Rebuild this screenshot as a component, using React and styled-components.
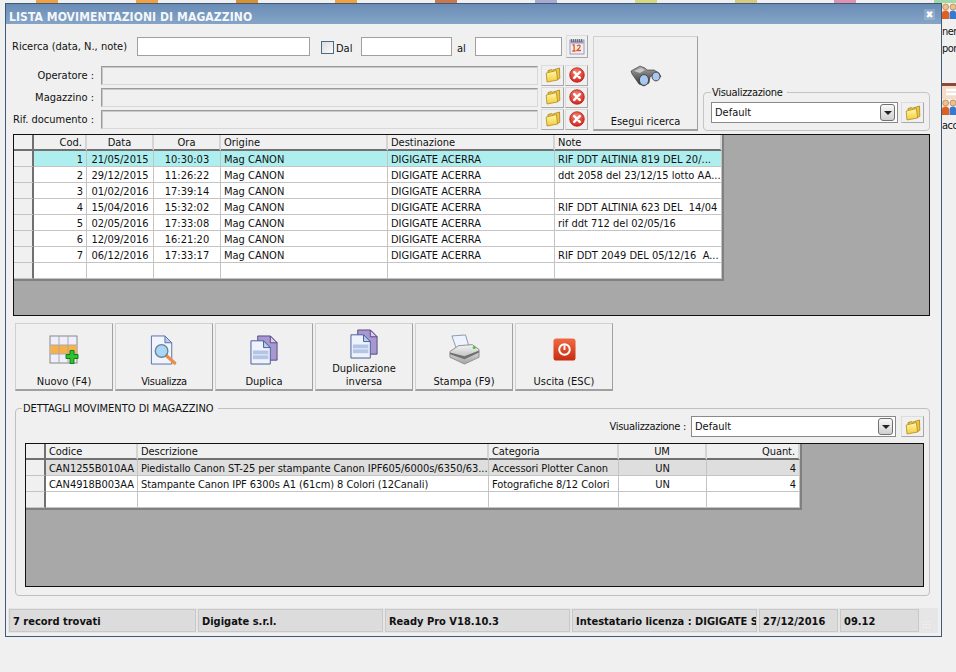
import styled, { createGlobalStyle } from "styled-components";

const GlobalStyle = createGlobalStyle`
  html, body { margin: 0; padding: 0; background: #f0f0f0; }
  body {
    width: 956px;
    height: 672px;
    overflow: hidden;
    position: relative;
    font-family: "DejaVu Sans", "Liberation Sans", sans-serif;
    font-stretch: condensed;
    font-size: 11px;
    color: #111;
  }
  * { box-sizing: border-box; }
`;

const moves = [
  [1, "21/05/2015", "10:30:03", "RIF DDT ALTINIA 819 DEL 20/..."],
  [2, "29/12/2015", "11:26:22", "ddt 2058 del 23/12/15 lotto AA..."],
  [3, "01/02/2016", "17:39:14", ""],
  [4, "15/04/2016", "15:32:02", "RIF DDT ALTINIA 623 DEL  14/04"],
  [5, "02/05/2016", "17:33:08", "rif ddt 712 del 02/05/16"],
  [6, "12/09/2016", "16:21:20", ""],
  [7, "06/12/2016", "17:33:17", "RIF DDT 2049 DEL 05/12/16  A..."],
];

const details = [
  ["CAN1255B010AA", "Piedistallo Canon ST-25 per stampante Canon IPF605/6000s/6350/63...", "Accessori Plotter Canon", "UN", "4"],
  ["CAN4918B003AA", "Stampante Canon IPF 6300s A1 (61cm) 8 Colori (12Canali)", "Fotografiche 8/12 Colori", "UN", "4"],
];

const topColors = ["#f0a040", "#f0a040", "#d89030", "#f0a040", "#c87850", "#a8a8d0", "#d8d880", "#d8c880", "#e090b0", "#a0d8a8"];

function FolderIcon() {
  return (
    <svg width="16" height="16" viewBox="0 0 16 16">
      <defs>
        <linearGradient id="folderFill" x1="0" y1="0" x2="0" y2="1">
          <stop offset="0" stopColor="#fff8b0" />
          <stop offset="1" stopColor="#f4cc38" />
        </linearGradient>
      </defs>
      <path d="M3 5 L3 3.6 L6.2 2.6 L7.4 3.2 L14.5 1 L14.8 11.4 L12.5 12.6 Z" fill="#eec440" stroke="#a88418" strokeWidth="0.8" />
      <path d="M1.2 6 L11.4 3.6 L12.6 13 L2 15 Z" fill="url(#folderFill)" stroke="#b08c20" strokeWidth="0.8" />
    </svg>
  );
}

function DeleteIcon() {
  return (
    <svg width="16" height="16" viewBox="0 0 16 16">
      <defs>
        <radialGradient id="deleteFill" cx="0.45" cy="0.3" r="0.8">
          <stop offset="0" stopColor="#f88070" />
          <stop offset="1" stopColor="#d01810" />
        </radialGradient>
      </defs>
      <circle cx="8" cy="8" r="7.3" fill="url(#deleteFill)" stroke="#a81810" strokeWidth="0.7" />
      <path d="M5.2 5.2 L10.8 10.8 M10.8 5.2 L5.2 10.8" stroke="#fff" strokeWidth="2.6" strokeLinecap="round" />
    </svg>
  );
}

function CalendarIcon() {
  return (
    <svg width="16" height="17" viewBox="0 0 16 17">
      <rect x="1" y="2" width="14" height="14" fill="#eeeef8" stroke="#8888b0" strokeWidth="0.8" />
      <rect x="1.5" y="2.5" width="13" height="3" fill="#9a9ab8" />
      <path d="M2.5 1 v3 M4.5 1 v3 M6.5 1 v3 M8.5 1 v3 M10.5 1 v3 M12.5 1 v3" stroke="#606070" strokeWidth="0.8" />
      <path d="M3.5 7 h1.6 v6 M3.3 13 h3.2 M8 8 q1.5 -1.5 3 -0.5 q1 1 -3 5 h4" fill="none" stroke="#e85810" strokeWidth="1.3" />
    </svg>
  );
}

function BinocularsIcon() {
  return (
    <svg width="32" height="22" viewBox="0 0 32 22">
      <defs>
        <linearGradient id="binoBody" x1="0" y1="0" x2="0" y2="1">
          <stop offset="0" stopColor="#a8a8a8" />
          <stop offset="1" stopColor="#303030" />
        </linearGradient>
      </defs>
      <path d="M1 6 L10 1 L15 3 L17 5 L24 5 L29 8 L31 12 L24 9 L20 12 L19 18 L14 21 L9 19 L2 9 Z" fill="url(#binoBody)" stroke="#303030" strokeWidth="0.6" />
      <path d="M4 6 L11 3 L15 5 L10 8 Z" fill="#c8c8c8" />
      <ellipse cx="14" cy="15" rx="4.6" ry="5.4" fill="#a8c8f0" stroke="#484848" />
      <ellipse cx="26" cy="11.5" rx="4" ry="4.4" fill="#a8c8f0" stroke="#484848" />
    </svg>
  );
}

function NewGridIcon() {
  return (
    <svg width="30" height="30" viewBox="0 0 30 30">
      <rect x="1" y="1" width="27" height="27" fill="#eeeefc" stroke="#888" />
      <rect x="1.5" y="10" width="26" height="9" fill="#f8b048" />
      <path d="M10 1 V28 M19 1 V28 M1 10 H28 M1 19 H28" stroke="#aaa" />
      <path d="M17 19.5 h4 v-4 h4 v4 h4 v4 h-4 v5 h-4 v-5 h-4 Z" fill="#30c030" stroke="#108010" />
    </svg>
  );
}

function ViewDocIcon() {
  return (
    <svg width="28" height="30" viewBox="0 0 28 31">
      <path d="M1 1 H15 L22 8 V30 H1 Z" fill="#f0f4fc" stroke="#5870a8" />
      <path d="M15 1 V8 H22 Z" fill="#b8d0ec" stroke="#5870a8" />
      <path d="M16 21 L25 29" stroke="#e89048" strokeWidth="3.4" strokeLinecap="round" />
      <circle cx="11.5" cy="16.5" r="6.5" fill="#a8d8f8" stroke="#708090" strokeWidth="1.4" />
    </svg>
  );
}

function DuplicateIcon() {
  return (
    <svg width="29" height="30" viewBox="0 0 30 31">
      <path d="M8 1 H21 L28 8 V26 H8 Z" fill="#a898d0" stroke="#584888" />
      <path d="M21 1 V8 H28 Z" fill="#d8d0ec" stroke="#584888" />
      <path d="M1 6 H14 L21 13 V30 H1 Z" fill="#eef2fc" stroke="#485c98" />
      <path d="M14 6 V13 H21 Z" fill="#b8d0ec" stroke="#485c98" />
      <rect x="3" y="16" width="16" height="9" fill="#b4c4e4" />
      <path d="M3 20.5 H19" stroke="#eef2fc" />
    </svg>
  );
}

function PrinterIcon() {
  return (
    <svg width="31" height="31" viewBox="0 0 32 32">
      <defs>
        <linearGradient id="printBody" x1="0" y1="0" x2="0" y2="1">
          <stop offset="0" stopColor="#f4f4f4" />
          <stop offset="1" stopColor="#a4a4a4" />
        </linearGradient>
      </defs>
      <path d="M3 2 L17 1 L21 14 L8 16 Z" fill="#eef4ff" stroke="#8898b0" />
      <path d="M1 18 L10 12 L24 11 L31 16 L31 24 L16 31 L1 24 Z" fill="url(#printBody)" stroke="#909090" />
      <path d="M1 19 L16 23 L31 17 L31 19 L16 26 L1 21 Z" fill="#707070" />
      <circle cx="26" cy="14" r="1.6" fill="#40c840" />
    </svg>
  );
}

function PowerIcon() {
  return (
    <svg width="23" height="23" viewBox="0 0 24 24">
      <defs>
        <linearGradient id="powerFill" x1="0" y1="0" x2="0" y2="1">
          <stop offset="0" stopColor="#f06a44" />
          <stop offset="1" stopColor="#c82c10" />
        </linearGradient>
      </defs>
      <rect x="0.5" y="0.5" width="23" height="23" rx="3" fill="url(#powerFill)" />
      <circle cx="12" cy="12" r="5.5" fill="none" stroke="#fff" strokeWidth="2" />
      <path d="M12 7.5 V12.5" stroke="#fff" strokeWidth="2" />
    </svg>
  );
}

function PeopleIcon() {
  return (
    <svg width="14" height="16" viewBox="0 0 14 16" style={{ display: "block" }}>
      <circle cx="3.6" cy="4" r="3" fill="#f0c088" stroke="#906030" strokeWidth="0.5" />
      <path d="M0 16 V10 Q0.5 7.5 3.6 7.5 Q6.6 7.5 7 10 V16 Z" fill="#e06020" />
      <circle cx="11" cy="4" r="3" fill="#f0c088" stroke="#906030" strokeWidth="0.5" />
      <path d="M7.5 16 V10 Q8 7.5 11 7.5 Q14 7.5 14 10 V16 Z" fill="#3878d0" />
    </svg>
  );
}

function SheetIcon() {
  return (
    <svg width="14" height="16" viewBox="0 0 14 16" style={{ display: "block" }}>
      <rect width="14" height="16" fill="#f4dcc8" />
      <rect width="14" height="3" fill="#8a4a3a" />
      <path d="M4 7 H14 M4 11 H14" stroke="#fff" strokeWidth="2.4" />
    </svg>
  );
}

function DataGrid({ widths, heads, children }) {
  const total = widths.reduce((sum, w) => sum + w, 0);
  return (
    <GridTable style={{ width: total }}>
      <colgroup>
        {widths.map((w, i) => <col key={i} style={{ width: w }} />)}
      </colgroup>
      <thead>
        <tr>
          <HeadCorner />
          {heads.map(([label, align]) => <HeadCell key={label} $align={align}>{label}</HeadCell>)}
        </tr>
      </thead>
      <tbody>{children}</tbody>
    </GridTable>
  );
}

function App() {
  return (
    <>
      <GlobalStyle />
      <TopStrip>
        {topColors.map((c, i) => <TopCell key={i}><TopBit $color={c} /></TopCell>)}
      </TopStrip>
      <SideStrip>
        <PeopleIcon />
        <SideText $top={4}>ner</SideText>
        <SideText>por</SideText>
        <SheetIcon />
        <PeopleIcon />
        <SideText $top={2}>acc</SideText>
      </SideStrip>

      <Window>
        <TitleBar>
          <TitleText>LISTA MOVIMENTAZIONI DI MAGAZZINO</TitleText>
          <CloseBox>✖</CloseBox>
        </TitleBar>

        <SearchArea>
          <SearchFields>
            <SearchRow>
              <SearchLabel>Ricerca (data, N., note)</SearchLabel>
              <TextInput $w={173} />
              <CheckBox />
              <CheckLabel>Dal</CheckLabel>
              <TextInput $w={91} />
              <AlLabel>al</AlLabel>
              <TextInput $w={87} />
              <IconButton $h={23} $w={22}><CalendarIcon /></IconButton>
            </SearchRow>
            {["Operatore :", "Magazzino :", "Rif. documento :"].map((label) => (
              <LookupRow key={label}>
                <LookupLabel>{label}</LookupLabel>
                <LookupField />
                <IconButton><FolderIcon /></IconButton>
                <IconButton><DeleteIcon /></IconButton>
              </LookupRow>
            ))}
          </SearchFields>
          <SearchButton>
            <BinocularsIcon />
            <span>Esegui ricerca</span>
          </SearchButton>
          <ViewGroup>
            <ViewLegend><Squeezed>Visualizzazione</Squeezed></ViewLegend>
            <ViewRow>
              <SelectBox $w={187}>Default<SelectArrow /></SelectBox>
              <IconButton><FolderIcon /></IconButton>
            </ViewRow>
          </ViewGroup>
        </SearchArea>

        <GridPanel>
          <DataGrid
            widths={[20, 53, 67, 67, 167, 167, 167]}
            heads={[["Cod.", "right"], ["Data", "center"], ["Ora", "center"], ["Origine", "left"], ["Destinazione", "left"], ["Note", "left"]]}
          >
            {moves.map(([id, date, time, note]) => (
              <GridRow key={id} $bg={id === 1 ? "#aeeeee" : "#fff"}>
                <RowMarker />
                <Cell $align="right">{id}</Cell>
                <Cell $align="center">{date}</Cell>
                <Cell $align="center">{time}</Cell>
                <Cell>Mag CANON</Cell>
                <Cell>DIGIGATE ACERRA</Cell>
                <Cell>{note}</Cell>
              </GridRow>
            ))}
            <GridRow $bg="#fff">
              <RowMarker />
              <Cell /><Cell /><Cell /><Cell /><Cell /><Cell />
            </GridRow>
          </DataGrid>
        </GridPanel>

        <ActionBar>
          <ActionButton><NewGridIcon /><ActionLabel>Nuovo (F4)</ActionLabel></ActionButton>
          <ActionButton><ViewDocIcon /><ActionLabel><Squeezed>Visualizza</Squeezed></ActionLabel></ActionButton>
          <ActionButton><DuplicateIcon /><ActionLabel>Duplica</ActionLabel></ActionButton>
          <ActionButton $gap={3}><DuplicateIcon /><ActionLabel>Duplicazione<br />inversa</ActionLabel></ActionButton>
          <ActionButton><PrinterIcon /><ActionLabel>Stampa (F9)</ActionLabel></ActionButton>
          <ActionButton $gap={14}><PowerIcon /><ActionLabel>Uscita (ESC)</ActionLabel></ActionButton>
        </ActionBar>

        <DetailGroup>
          <DetailLegend>DETTAGLI MOVIMENTO DI MAGAZZINO</DetailLegend>
          <DetailToolbar>
            <Squeezed>Visualizzazione :</Squeezed>
            <SelectBox $w={205}>Default<SelectArrow /></SelectBox>
            <IconButton><FolderIcon /></IconButton>
          </DetailToolbar>
          <DetailPanel>
            <DataGrid
              widths={[20, 92, 351, 130, 88, 93]}
              heads={[["Codice", "left"], ["Descrizione", "left"], ["Categoria", "left"], ["UM", "center"], ["Quant.", "right"]]}
            >
              {details.map(([code, desc, cat, um, qty], i) => (
                <GridRow key={code} $bg={i === 0 ? "#dedede" : "#fff"}>
                  <RowMarker />
                  <Cell>{code}</Cell>
                  <Cell>{desc}</Cell>
                  <Cell>{cat}</Cell>
                  <Cell $align="center">{um}</Cell>
                  <Cell $align="right">{qty}</Cell>
                </GridRow>
              ))}
              <GridRow $bg="#fff">
                <RowMarker />
                <Cell /><Cell /><Cell /><Cell /><Cell />
              </GridRow>
            </DataGrid>
          </DetailPanel>
        </DetailGroup>

        <StatusBar>
          <StatusPanel $w={187}>7 record trovati</StatusPanel>
          <StatusPanel $w={185}>Digigate s.r.l.</StatusPanel>
          <StatusPanel $w={185}>Ready Pro V18.10.3</StatusPanel>
          <StatusPanel $w={185}>Intestatario licenza : DIGIGATE S</StatusPanel>
          <StatusPanel $w={79}>27/12/2016</StatusPanel>
          <StatusPanel $w={79}>09.12</StatusPanel>
          <Grip />
        </StatusBar>
      </Window>
    </>
  );
}

const Squeezed = styled.span`
  letter-spacing: -0.3px;
`;

const TopStrip = styled.div`
  position: absolute;
  top: 0;
  left: 36px;
  display: flex;
  height: 3px;
  width: 920px;
  overflow: hidden;
`;

const TopCell = styled.div`
  width: 99.8px;
  flex: none;
`;

const TopBit = styled.div`
  width: 22px;
  height: 3px;
  background: ${(p) => p.$color};
`;

const SideStrip = styled.div`
  position: absolute;
  top: 3px;
  left: 942px;
  width: 14px;
  overflow: hidden;
  display: flex;
  flex-direction: column;
`;

const SideText = styled.div`
  height: 17px;
  line-height: 17px;
  font-size: 11px;
  letter-spacing: -0.5px;
  margin-top: ${(p) => p.$top || 0}px;
  &:nth-of-type(2) { margin-bottom: 26px; }
`;

const Window = styled.div`
  position: absolute;
  top: 3px;
  left: 5px;
  width: 937px;
  height: 634px;
  background: #f0f0f0;
  border: 1px solid #3f5a78;
  display: flex;
  flex-direction: column;
`;

const TitleBar = styled.div`
  height: 20px;
  flex: none;
  padding: 0 6px 0 3px;
  display: flex;
  align-items: center;
  justify-content: space-between;
  background: linear-gradient(#6a8db6, #85a4c7);
  color: #f4f7fa;
  font-weight: bold;
  font-size: 12px;
`;

const TitleText = styled.span`
  padding-top: 5px;
  letter-spacing: 0.1px;
`;

const CloseBox = styled.span`
  width: 11px;
  height: 11px;
  line-height: 11px;
  font-size: 10px;
  text-align: center;
  color: #fff;
  background: rgba(255, 255, 255, 0.18);
`;

const SearchArea = styled.div`
  display: flex;
  align-items: flex-end;
  gap: 5px;
  margin: 11px 0 0 6px;
  height: 96px;
`;

const SearchFields = styled.div`
  width: 576px;
  height: 96px;
`;

const SearchRow = styled.div`
  display: flex;
  align-items: center;
  height: 23px;
  margin-bottom: 6px;
`;

const SearchLabel = styled.span`
  width: 125px;
  flex: none;
`;

const TextInput = styled.div`
  width: ${(p) => p.$w}px;
  height: 19px;
  flex: none;
  background: #fff;
  border: 1px solid #a0a0a0;
`;

const CheckBox = styled.div`
  width: 13px;
  height: 13px;
  margin: 2px 2px 0 11px;
  flex: none;
  border: 1px solid #4a6a8a;
  background: linear-gradient(135deg, #dcdcdc, #fafafa);
`;

const CheckLabel = styled.span`
  width: 25px;
  flex: none;
  padding-top: 3px;
`;

const AlLabel = styled.span`
  width: 23px;
  padding-left: 5px;
  flex: none;
  padding-top: 3px;
`;

const IconButton = styled.div`
  width: ${(p) => p.$w || 23}px;
  height: ${(p) => p.$h || 21}px;
  flex: none;
  display: flex;
  align-items: center;
  justify-content: center;
  background: #f0f0f0;
  border: 1px solid #dcdcdc;
  border-right: 1px solid #a8a8a8;
  border-bottom: 1px solid #a8a8a8;
  ${SearchRow} & { margin-left: 4px; }
`;

const LookupRow = styled.div`
  display: flex;
  align-items: center;
  gap: 1px;
  height: 22px;
`;

const LookupLabel = styled.span`
  width: 82px;
  flex: none;
  text-align: right;
`;

const LookupField = styled.div`
  width: 437px;
  height: 19px;
  margin: 0 2px 0 6px;
  flex: none;
  background: #f0f0f0;
  border: 1px solid #d8d8d8;
  border-top: 1px solid #9a9a9a;
  border-left: 1px solid #9a9a9a;
  box-shadow: inset 1px 1px #c8c8c8;
`;

const SearchButton = styled.div`
  width: 105px;
  height: 95px;
  flex: none;
  padding: 28px 0 1px;
  display: flex;
  flex-direction: column;
  align-items: center;
  justify-content: space-between;
  background: #f0f0f0;
  border: 1px solid #d0d0d0;
  border-right: 1px solid #a0a0a0;
  border-bottom: 2px solid #a0a0a0;
`;

const ViewGroup = styled.fieldset`
  width: 227px;
  height: 45px;
  margin: 0;
  padding: 3px 5px 0 7px;
  border: 1px solid #c4c4c4;
  border-radius: 4px;
  min-width: 0;
`;

const ViewLegend = styled.legend`
  margin-left: 0;
  padding: 0 4px 0 1px;
  line-height: 13px;
`;

const ViewRow = styled.div`
  display: flex;
  gap: 3px;
`;

const SelectBox = styled.div`
  width: ${(p) => p.$w}px;
  height: 21px;
  flex: none;
  padding: 0 2px 0 3px;
  display: flex;
  align-items: center;
  justify-content: space-between;
  line-height: 19px;
  background: #fff;
  border: 1px solid #8a8a8a;
`;

const SelectArrow = styled.span`
  width: 15px;
  height: 17px;
  display: flex;
  align-items: center;
  justify-content: center;
  border: 1px solid #707070;
  border-radius: 3px;
  background: linear-gradient(#f8f8f8, #d0d0d0);
  &::after {
    content: "";
    border-left: 4px solid transparent;
    border-right: 4px solid transparent;
    border-top: 4px solid #222;
  }
`;

const GridPanel = styled.div`
  margin: 3px 0 0 7px;
  width: 917px;
  height: 182px;
  flex: none;
  background: #a8a8a8;
  border: 1px solid #111;
`;

const GridTable = styled.table`
  table-layout: fixed;
  border-collapse: separate;
  border-spacing: 0;
  border-right: 2px solid #808080;
  border-bottom: 2px solid #808080;
`;

const HeadCorner = styled.th`
  height: 16px;
  padding: 0;
  background: #f0f0f0;
  border-right: 2px solid #707070;
  border-bottom: 2px solid #707070;
`;

const HeadCell = styled.th`
  height: 16px;
  padding: 2px 3px 0;
  vertical-align: top;
  font-weight: normal;
  text-align: ${(p) => p.$align};
  line-height: 12px;
  background: #f0f0f0;
  white-space: nowrap;
  overflow: hidden;
  border-right: 2px solid #d4d4d4;
  border-bottom: 2px solid #707070;
`;

const GridRow = styled.tr`
  background: ${(p) => p.$bg};
`;

const RowMarker = styled.td`
  height: 16px;
  padding: 0;
  background: #f0f0f0;
  border-right: 2px solid #707070;
  border-bottom: 1px solid #c4c4c4;
`;

const Cell = styled.td`
  height: 16px;
  padding: 2px 3px 0;
  vertical-align: top;
  line-height: 13px;
  text-align: ${(p) => p.$align || "left"};
  white-space: pre;
  overflow: hidden;
  border-right: 1px solid #c4c4c4;
  border-bottom: 1px solid #c4c4c4;
`;

const ActionBar = styled.div`
  display: flex;
  gap: 2px;
  margin: 7px 0 0 9px;
`;

const ActionButton = styled.div`
  width: 98px;
  height: 68px;
  flex: none;
  padding-bottom: 1px;
  display: flex;
  flex-direction: column;
  align-items: center;
  justify-content: flex-end;
  gap: ${(p) => p.$gap || 10}px;
  background: #f0f0f0;
  border: 1px solid #d0d0d0;
  border-right: 1px solid #a0a0a0;
  border-bottom: 2px solid #a0a0a0;
`;

const ActionLabel = styled.span`
  text-align: center;
  line-height: 13px;
`;

const DetailGroup = styled.fieldset`
  width: 915px;
  height: 194px;
  margin: 11px 0 0 9px;
  padding: 1px 5px 0 9px;
  flex: none;
  min-width: 0;
  border: 1px solid #c0c0c0;
  border-radius: 4px;
`;

const DetailLegend = styled.legend`
  margin-left: -3px;
  padding: 0 4px 0 1px;
  line-height: 13px;
`;

const DetailToolbar = styled.div`
  display: flex;
  align-items: center;
  justify-content: flex-end;
  gap: 5px;
`;

const DetailPanel = styled.div`
  margin-top: 6px;
  width: 899px;
  height: 144px;
  letter-spacing: -0.06px;
  background: #a8a8a8;
  border: 1px solid #111;
`;

const StatusBar = styled.div`
  display: flex;
  align-items: center;
  gap: 2px;
  margin: 12px 0 0 2px;
  padding: 0 0 0 1px;
  width: 930px;
  height: 25px;
  flex: none;
  background: #e6e6e6;
`;

const StatusPanel = styled.div`
  width: ${(p) => p.$w}px;
  height: 23px;
  flex: none;
  padding: 1px 3px 0;
  display: flex;
  align-items: center;
  overflow: hidden;
  white-space: nowrap;
  font-weight: bold;
  font-size: 11px;
  background: #dcdcdc;
  border: 1px solid #c8c8c8;
`;

const Grip = styled.div`
  width: 8px;
  height: 8px;
  margin: 6px 0 0 1px;
  background: radial-gradient(circle, #f8f8f8 1px, transparent 1px) 0 0 / 3px 3px;
`;

export default App;
